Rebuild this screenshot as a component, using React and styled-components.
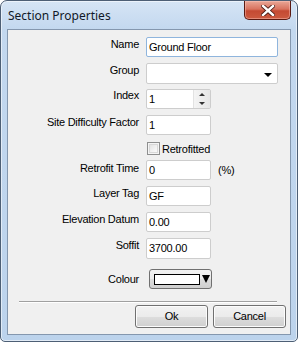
import React from "react";
import styled, { createGlobalStyle } from "styled-components";

const GlobalStyle = createGlobalStyle`
  html, body { margin: 0; padding: 0; background: #ffffff; }
  * { box-sizing: border-box; }
`;

const Window = styled.div`
  width: 298px;
  height: 342px;
  border: 1px solid #4d5f75;
  border-radius: 7px 7px 5px 5px;
  padding: 0 6px 6px 6px;
  display: flex;
  flex-direction: column;
  background: linear-gradient(180deg, #d6e5f5 0px, #c3d8ef 28px, #bcd3ec 100%);
  box-shadow: inset 0 0 0 1px rgba(255, 255, 255, 0.55);
`;

const TitleBar = styled.div`
  height: 28px;
  display: flex;
  align-items: flex-start;
  justify-content: space-between;
`;

const Title = styled.span`
  font-family: "Noto Sans", "Open Sans", sans-serif;
  font-size: 12px;
  line-height: 16px;
  color: #101828;
  padding: 7px 0 0 1px;
`;

const CloseButton = styled.div`
  width: 47px;
  height: 19px;
  border: 1px solid #5a1a12;
  border-top: none;
  border-radius: 0 0 5px 5px;
  background: linear-gradient(180deg, #e9a797 0%, #d8735f 45%, #c44a33 55%, #cc5a40 100%);
  box-shadow: inset 0 0 0 1px rgba(255, 200, 190, 0.45);
  display: flex;
  align-items: center;
  justify-content: center;
`;

const Client = styled.div`
  flex: 1;
  background: #f0f0f0;
  border: 1px solid #8497ae;
  padding-top: 7px;
  display: flex;
  flex-direction: column;
  font-family: "Liberation Sans", Arial, sans-serif;
  font-size: 11px;
  letter-spacing: -0.25px;
  color: #000;
`;

const Row = styled.div`
  display: flex;
  align-items: flex-start;
  margin-top: ${(p) => p.$mt || 0}px;
`;

const Label = styled.div`
  width: 131px;
  margin-right: 7px;
  text-align: right;
  line-height: 13px;
  padding-top: ${(p) => (p.$pt == null ? 1 : p.$pt)}px;
  white-space: nowrap;
`;

const TextBox = styled.div`
  width: ${(p) => p.$w}px;
  height: ${(p) => p.$h || 20}px;
  border: 1px solid ${(p) => (p.$focus ? "#8fb5dd" : "#cdcdcd")};
  border-radius: 2px;
  background: #ffffff;
  padding-left: 2px;
  display: flex;
  align-items: center;
  line-height: 13px;
  position: relative;
`;

const SelectArrow = styled.span`
  margin-left: auto;
  margin-right: 5px;
  width: 0;
  height: 0;
  border-left: 4px solid transparent;
  border-right: 4px solid transparent;
  border-top: 4px solid #000;
  margin-top: 2px;
`;

const Spinner = styled.div`
  margin-left: auto;
  width: 17px;
  height: 100%;
  display: flex;
  flex-direction: column;
  background: linear-gradient(90deg, #f4f4f4, #e6e6e6);
  border-left: 1px solid #e2e2e2;
`;

const SpinHalf = styled.div`
  flex: 1;
  display: flex;
  align-items: center;
  justify-content: center;
`;

const SpinTri = styled.span`
  width: 0;
  height: 0;
  border-left: 3px solid transparent;
  border-right: 3px solid transparent;
  ${(p) => (p.$up ? "border-bottom: 3px solid #333;" : "border-top: 3px solid #333;")}
`;

const CheckRow = styled.div`
  display: flex;
  align-items: center;
  margin-left: 1px;
  height: 13px;
`;

const CheckBox = styled.div`
  width: 13px;
  height: 13px;
  border: 1px solid #8e8f8f;
  background: linear-gradient(135deg, #dcdcdc 0%, #f3f3f3 60%, #ffffff 100%);
  box-shadow: inset 0 0 0 1px #f4f4f4, inset 0 0 0 2px #d8d8d8;
  margin-right: 2px;
`;

const Suffix = styled.span`
  margin-left: 7px;
  line-height: 13px;
  padding-top: 4px;
`;

const ColourButton = styled.div`
  margin-left: 3px;
  width: 63px;
  height: 20px;
  border: 1px solid #707070;
  border-radius: 3px;
  background: linear-gradient(180deg, #f2f2f2 0%, #ebebeb 50%, #dddddd 51%, #cfcfcf 100%);
  display: flex;
  align-items: center;
  padding-left: 4px;
`;

const Swatch = styled.div`
  width: 46px;
  height: 11px;
  border: 1px solid #000;
  background: #fff;
`;

const ColourArrow = styled.span`
  margin-left: 2px;
  width: 0;
  height: 0;
  border-left: 4px solid transparent;
  border-right: 4px solid transparent;
  border-top: 8px solid #000;
`;

const Separator = styled.div`
  margin: 12px 13px 0 11px;
  height: 2px;
  border-top: 1px solid #a0a0a0;
  border-bottom: 1px solid #ffffff;
`;

const ButtonRow = styled.div`
  display: flex;
  justify-content: flex-end;
  gap: 5px;
  margin-top: 2px;
  padding-right: 4px;
`;

const Button = styled.div`
  width: 73px;
  height: 23px;
  border: 1px solid #707070;
  border-radius: 3px;
  background: linear-gradient(180deg, #f2f2f2 0%, #ebebeb 50%, #dddddd 51%, #cfcfcf 100%);
  box-shadow: inset 0 0 0 1px #fcfcfc;
  display: flex;
  align-items: center;
  justify-content: center;
  line-height: 13px;
`;

function CloseGlyph() {
  return (
    <svg width="14" height="11" viewBox="0 0 14 11">
      <path
        d="M2 1 L12 10 M12 1 L2 10"
        stroke="#4a1a14"
        strokeWidth="4.2"
        strokeLinecap="square"
        fill="none"
      />
      <path
        d="M2 1 L12 10 M12 1 L2 10"
        stroke="#ffffff"
        strokeWidth="2.4"
        strokeLinecap="square"
        fill="none"
      />
    </svg>
  );
}

export default function App() {
  return (
    <>
      <GlobalStyle />
      <Window>
        <TitleBar>
          <Title>Section Properties</Title>
          <CloseButton>
            <CloseGlyph />
          </CloseButton>
        </TitleBar>
        <Client>
          <Row>
            <Label>Name</Label>
            <TextBox $w={132} $focus>Ground Floor</TextBox>
          </Row>
          <Row $mt={6}>
            <Label>Group</Label>
            <TextBox $w={132} $h={21}>
              <SelectArrow />
            </TextBox>
          </Row>
          <Row $mt={5}>
            <Label $pt={0}>Index</Label>
            <TextBox $w={65}>
              1
              <Spinner>
                <SpinHalf>
                  <SpinTri $up />
                </SpinHalf>
                <SpinHalf>
                  <SpinTri />
                </SpinHalf>
              </Spinner>
            </TextBox>
          </Row>
          <Row $mt={6}>
            <Label>Site Difficulty Factor</Label>
            <TextBox $w={65}>1</TextBox>
          </Row>
          <Row $mt={7}>
            <Label />
            <CheckRow>
              <CheckBox />
              Retrofitted
            </CheckRow>
          </Row>
          <Row $mt={5}>
            <Label $pt={2}>Retrofit Time</Label>
            <TextBox $w={65}>0</TextBox>
            <Suffix>(%)</Suffix>
          </Row>
          <Row $mt={6}>
            <Label>Layer Tag</Label>
            <TextBox $w={65}>GF</TextBox>
          </Row>
          <Row $mt={6}>
            <Label>Elevation Datum</Label>
            <TextBox $w={65}>0.00</TextBox>
          </Row>
          <Row $mt={6}>
            <Label>Soffit</Label>
            <TextBox $w={65} $h={21}>3700.00</TextBox>
          </Row>
          <Row $mt={10}>
            <Label $pt={4}>Colour</Label>
            <ColourButton>
              <Swatch />
              <ColourArrow />
            </ColourButton>
          </Row>
          <Separator />
          <ButtonRow>
            <Button>Ok</Button>
            <Button>Cancel</Button>
          </ButtonRow>
        </Client>
      </Window>
    </>
  );
}
